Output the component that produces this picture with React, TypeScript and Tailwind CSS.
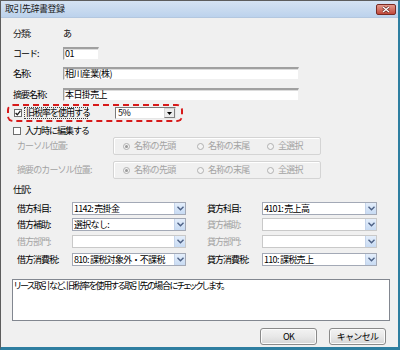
import React from "react";

const font = { fontFamily: '"Noto Sans CJK JP", "Noto Sans", sans-serif' };

function Chevron() {
  return (
    <svg width="7" height="5" viewBox="0 0 7 5">
      <path d="M0.5 0.8 L3.5 3.8 L6.5 0.8" fill="none" stroke="#4d6185" strokeWidth="1.4" />
    </svg>
  );
}

function VSelect({ text, disabled, w }: { text?: string; disabled?: boolean; w: string }) {
  return (
    <div
      className={`${w} h-[13px] flex items-stretch bg-white border ${
        disabled ? "border-[#c9c9c9]" : "border-[#a3a9b6]"
      }`}
    >
      <div className="flex-1 text-[9px] leading-[11px] pl-[1px] text-black tracking-[-0.7px] whitespace-nowrap overflow-hidden">
        {text}
      </div>
      <div className="w-[11px] bg-gradient-to-b from-[#e4eefb] to-[#c8dbf3] border-l border-[#c5d4ea] flex items-center justify-center">
        <Chevron />
      </div>
    </div>
  );
}

function Radio({ on, label }: { on?: boolean; label: string }) {
  return (
    <div className="flex items-center gap-[4px]">
      <div className="w-[7px] h-[7px] rounded-full border border-[#b0b0b0] bg-[#f4f4f4] flex items-center justify-center">
        {on && <div className="w-[3px] h-[3px] rounded-full bg-[#9a9a9a]" />}
      </div>
      <span className="text-[9px] text-[#a3a3a3] tracking-[-0.7px]">{label}</span>
    </div>
  );
}

function Group({ label }: { label: string }) {
  return (
    <div className="h-[18px] flex items-center">
      <div className="w-[112px] pl-[16px] text-[9px] text-[#a3a3a3] tracking-[-0.9px] whitespace-nowrap">{label}</div>
      <div className="w-[208px] h-[18px] border border-[#d4d4d4] rounded-[2px] shadow-[inset_1px_1px_0_#ffffff] flex items-center pl-[9px]">
        <div className="w-[74px]"><Radio on label="名称の先頭" /></div>
        <div className="w-[70px]"><Radio label="名称の末尾" /></div>
        <Radio label="全選択" />
      </div>
    </div>
  );
}

function JRow({ l1, t1, d1, l2, t2, d2, dl1, dl2, mt }: any) {
  return (
    <div className={`flex items-center h-[13px] ${mt}`}>
      <div className={`w-[71px] pl-[16px] text-[9px] tracking-[-1px] whitespace-nowrap ${dl1 ? "text-[#a3a3a3]" : "text-black"}`}>{l1}</div>
      <VSelect w="w-[114px]" text={t1} disabled={d1} />
      <div className={`w-[76px] pl-[21px] text-[9px] tracking-[-1px] whitespace-nowrap ${dl2 ? "text-[#a3a3a3]" : "text-black"}`}>{l2}</div>
      <VSelect w="w-[115px]" text={t2} disabled={d2} />
    </div>
  );
}

function TextInput({ w, text }: { w: string; text: string }) {
  return (
    <div className={`${w} h-[13px] bg-white border-t-2 border-l border-[#a0a0a0] border-b border-r border-b-[#f0f0f0] border-r-[#f0f0f0] text-[9px] leading-[10px] pl-[1px] tracking-[-0.6px] text-black shadow-[inset_1px_1px_0_#dcdcdc]`}>
      {text}
    </div>
  );
}

function Btn({ label }: { label: string }) {
  return (
    <div className="w-[57px] h-[17px] rounded-[3px] border border-[#8a8a8a] bg-gradient-to-b from-[#f3f3f3] via-[#e8e8e8] to-[#d6d6d6] flex items-center justify-center text-[9px] text-black tracking-[-0.7px] shadow-[inset_0_0_0_1px_#fbfbfb]">
      {label}
    </div>
  );
}

export default function App() {
  return (
    <div style={font} className="w-[400px] h-[350px] bg-[#f0f0f0] flex flex-col border-l border-t border-[#5d5d5d] border-r-2 border-r-[#2e7ea0] border-b-[3px] border-b-[#2e7ea0] overflow-hidden">
      {/* title bar */}
      <div className="h-[17px] shrink-0 bg-gradient-to-b from-[#d5e3f3] to-[#bcd2ec] flex items-center justify-between pl-[4px] pr-[2px] border-b border-[#b3c7df]">
        <span className="text-[9px] text-[#1a1a1a] tracking-[-0.5px]">取引先辞書登録</span>
        <div className="w-[20px] h-[11px] rounded-[2px] border border-[#7a2a22] bg-gradient-to-b from-[#e3998c] to-[#c0473a] flex items-center justify-center">
          <svg width="8" height="7" viewBox="0 0 8 7">
            <path d="M1 1 L7 6 M7 1 L1 6" stroke="#5a1d17" strokeWidth="2.6" />
            <path d="M1 1 L7 6 M7 1 L1 6" stroke="#ffffff" strokeWidth="1.4" />
          </svg>
        </div>
      </div>

      {/* 分類 */}
      <div className="flex items-center h-[12px] mt-[10px]">
        <div className="w-[62px] pl-[12px] text-[9px] tracking-[-1px] text-[#222]">分類:</div>
        <div className="text-[9px] text-black">あ</div>
      </div>
      {/* コード */}
      <div className="flex items-center h-[13px] mt-[7px]">
        <div className="w-[62px] pl-[12px] text-[9px] tracking-[-1px] text-black">コード:</div>
        <TextInput w="w-[36px]" text="01" />
      </div>
      {/* 名称 */}
      <div className="flex items-center h-[13px] mt-[7px]">
        <div className="w-[62px] pl-[12px] text-[9px] tracking-[-1px] text-black">名称:</div>
        <TextInput w="w-[236px]" text="相川産業(株)" />
      </div>
      {/* 摘要名称 */}
      <div className="flex items-center h-[13px] mt-[8px]">
        <div className="w-[62px] pl-[12px] text-[9px] tracking-[-1px] text-black">摘要名称:</div>
        <TextInput w="w-[236px]" text="本日掛売上" />
      </div>

      {/* red dashed box */}
      <div className="ml-[6px] mt-[3px] w-[176px] h-[18px] border-2 border-dashed border-[#d71a1a] rounded-[6px] flex items-center pl-[5px]">
        <div className="w-[8px] h-[8px] bg-white border border-[#6e6e6e] flex items-center justify-center">
          <svg width="6" height="6" viewBox="0 0 6 6">
            <path d="M0.6 3 L2.3 4.8 L5.4 0.8" fill="none" stroke="#1c1c1c" strokeWidth="1.3" />
          </svg>
        </div>
        <div className="ml-[2px] px-[1px] w-[64px] border border-dotted border-[#444] text-[9px] leading-[10px] tracking-[-1px] text-black whitespace-nowrap">
          旧税率を使用する
        </div>
        <div className="ml-[27px] w-[61px] h-[12px] bg-white border-t border-l border-[#7a7a7a] border-b border-r border-b-[#e6e6e6] border-r-[#e6e6e6] flex items-stretch">
          <div className="flex-1 text-[9px] leading-[10px] pl-[2px] tracking-[-0.6px]">5%</div>
          <div className="w-[11px] bg-[#ececec] border border-[#d6d6d6] border-r-[#808080] border-b-[#808080] flex items-center justify-center">
            <svg width="5" height="3" viewBox="0 0 5 3">
              <path d="M0 0 L5 0 L2.5 3 Z" fill="#000" />
            </svg>
          </div>
        </div>
      </div>

      {/* 入力時に編集する */}
      <div className="flex items-center h-[11px] mt-[3px] pl-[12px]">
        <div className="w-[8px] h-[8px] bg-white border border-[#6e6e6e]" />
        <div className="ml-[4px] text-[9px] tracking-[-1px] text-black">入力時に編集する</div>
      </div>

      <div className="mt-[1px]"><Group label="カーソル位置:" /></div>
      <div className="mt-[6px]"><Group label="摘要のカーソル位置:" /></div>

      {/* 仕訳 */}
      <div className="h-[12px] mt-[5px] pl-[12px] text-[9px] tracking-[-1px] text-black flex items-center">仕訳:</div>

      <JRow mt="mt-[6px]" l1="借方科目:" t1="1142: 売掛金" l2="貸方科目:" t2="4101: 売上高" />
      <JRow mt="mt-[3px]" l1="借方補助:" t1="選択なし:" l2="貸方補助:" dl2 d2 />
      <JRow mt="mt-[4px]" l1="借方部門:" dl1 d1 l2="貸方部門:" dl2 d2 />
      <JRow mt="mt-[5px]" l1="借方消費税:" t1="810: 課税対象外・不課税" l2="貸方消費税:" t2="110: 課税売上" />

      {/* memo */}
      <div className="ml-[11px] mt-[13px] w-[378px] h-[42px] bg-white border border-[#828790] text-[9px] leading-[10px] pl-[1px] pt-[1px] tracking-[-1.4px] [font-feature-settings:'palt'] text-black whitespace-nowrap overflow-hidden">
        リース取引など、旧税率を使用する取引先の場合にチェックします。
      </div>

      {/* buttons */}
      <div className="flex justify-end gap-[12px] mt-[7px] pr-[12px]">
        <Btn label="OK" />
        <Btn label="キャンセル" />
      </div>
    </div>
  );
}
